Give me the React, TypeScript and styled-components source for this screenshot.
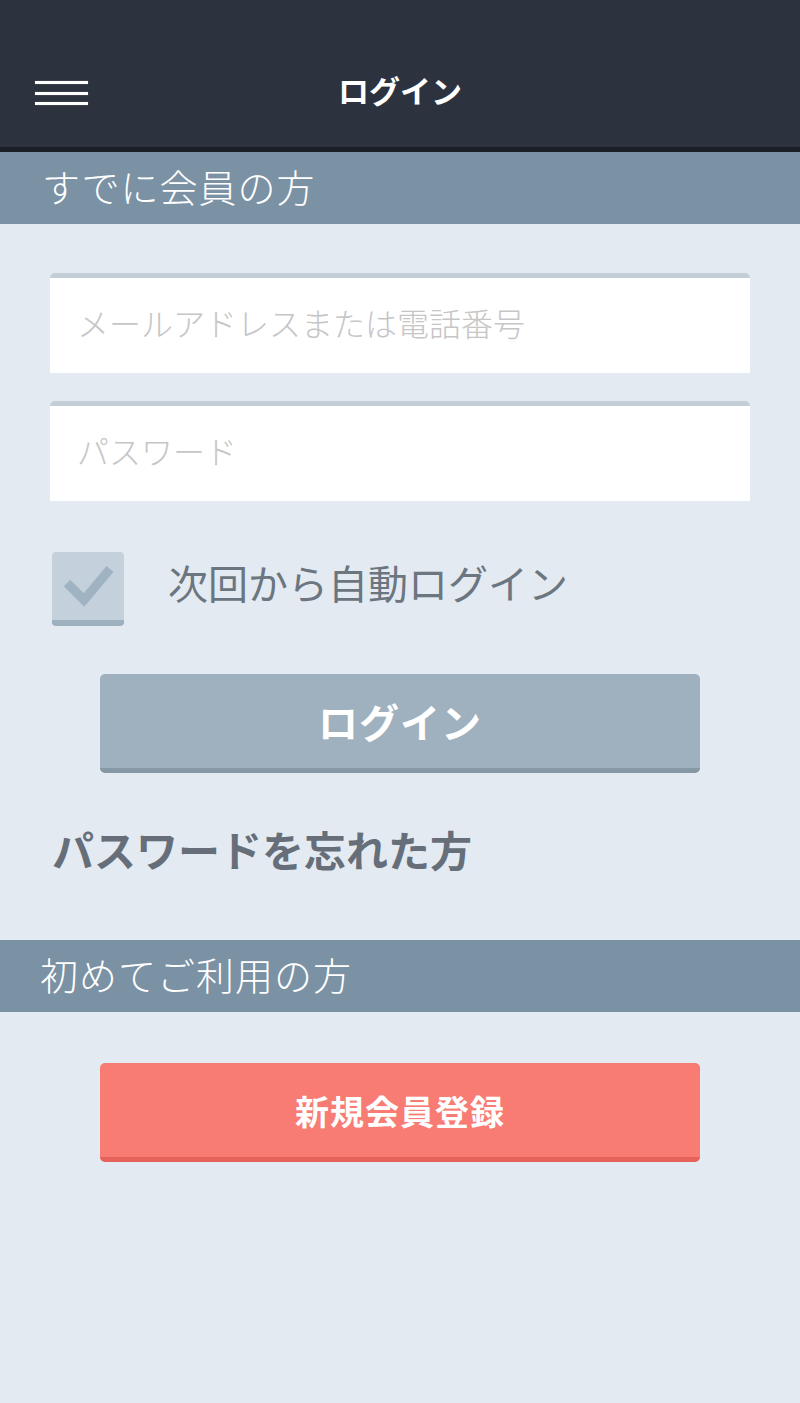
import styled, { createGlobalStyle } from "styled-components";

const GlobalStyle = createGlobalStyle`
  html, body {
    margin: 0;
    padding: 0;
    background: #e3eaf1;
  }
  body {
    font-family: "Noto Sans CJK JP", "Noto Sans", "Liberation Sans", sans-serif;
  }
  * {
    box-sizing: border-box;
  }
`;

const Page = styled.div`
  width: 800px;
  min-height: 1403px;
  background: #e3eaf1;
`;

const Header = styled.header`
  height: 152px;
  background: #2d333e;
  border-bottom: 5px solid #1b1f26;
  display: flex;
  align-items: flex-end;
  padding: 0 0 33px 0;
  position: relative;
`;

const HeaderRow = styled.div`
  width: 100%;
  height: 50px;
  display: flex;
  align-items: center;
  justify-content: center;
`;

const MenuButton = styled.button`
  position: absolute;
  left: 35px;
  top: 81px;
  width: 53px;
  height: 24px;
  padding: 0;
  border: none;
  background: transparent;
  display: flex;
  flex-direction: column;
  justify-content: space-between;
`;

const MenuLine = styled.span`
  display: block;
  width: 53px;
  height: 3px;
  background: #ffffff;
  box-shadow: 0 0 1px rgba(255, 255, 255, 0.6);
`;

const Title = styled.h1`
  margin: 0;
  color: #ffffff;
  font-size: 31px;
  font-weight: 700;
  line-height: 1;
`;

const SectionBar = styled.div`
  height: 72px;
  background: #7b91a4;
  display: flex;
  align-items: center;
  padding-left: ${(p: { $indent: number }) => p.$indent}px;
  padding-bottom: 6px;
  color: #ffffff;
  font-size: 38px;
  font-weight: 300;
  letter-spacing: 1px;
`;

const Form = styled.div`
  display: flex;
  flex-direction: column;
  padding: 49px 50px 0 50px;
`;

const Field = styled.input<{ $gap: number }>`
  display: block;
  width: 700px;
  height: 100px;
  margin-top: ${(p) => p.$gap}px;
  border: none;
  border-top: 5px solid #c3ced8;
  border-radius: 5px 5px 0 0;
  background: #ffffff;
  padding: 0 0 8px 27px;
  font-family: inherit;
  font-size: 32px;
  font-weight: 300;
  color: #555;
  outline: none;
  &::placeholder {
    color: #c6c6c6;
  }
`;

const CheckRow = styled.label`
  display: flex;
  align-items: center;
  gap: 44px;
  margin-top: 51px;
  padding-left: 2px;
`;

const CheckBox = styled.span`
  width: 72px;
  height: 74px;
  border-radius: 4px;
  background: #c4d1dc;
  border-bottom: 6px solid #9fb0bf;
  display: block;
`;

const CheckLabel = styled.span`
  color: #6c7680;
  font-size: 40px;
  line-height: 1;
  margin-top: -14px;
`;

const ButtonWrap = styled.div`
  display: flex;
  justify-content: center;
  margin-top: ${(p: { $gap: number }) => p.$gap}px;
`;

const ActionButton = styled.button<{ $bg: string; $edge: string; $size: number }>`
  width: 600px;
  height: 99px;
  border: none;
  border-radius: 5px;
  background: ${(p) => p.$bg};
  border-bottom: 5px solid ${(p) => p.$edge};
  color: #ffffff;
  font-family: inherit;
  font-size: ${(p) => p.$size}px;
  font-weight: 700;
  padding: 0;
  letter-spacing: 1px;
`;

const ForgotLink = styled.a`
  display: block;
  margin: 55px 0 0 2px;
  color: #666f79;
  font-size: 42px;
  font-weight: 700;
  line-height: 1;
  text-decoration: none;
`;

const Spacer = styled.div`
  height: 70px;
`;

export default function App() {
  return (
    <Page>
      <GlobalStyle />
      <Header>
        <MenuButton aria-label="menu">
          <MenuLine />
          <MenuLine />
          <MenuLine />
        </MenuButton>
        <HeaderRow>
          <Title>ログイン</Title>
        </HeaderRow>
      </Header>

      <SectionBar $indent={42}>すでに会員の方</SectionBar>
      <Form>
        <Field $gap={0} type="text" placeholder="メールアドレスまたは電話番号" />
        <Field $gap={28} type="password" placeholder="パスワード" />
        <CheckRow>
          <CheckBox>
            <svg width="72" height="68" viewBox="0 0 72 68">
              <path
                d="M15 31 L32 48 L58 17"
                fill="none"
                stroke="#a0b3c2"
                strokeWidth="9"
                strokeLinecap="butt"
                strokeLinejoin="miter"
              />
            </svg>
          </CheckBox>
          <CheckLabel>次回から自動ログイン</CheckLabel>
        </CheckRow>
        <ButtonWrap $gap={48}>
          <ActionButton $bg="#9fb1bf" $edge="#8697a5" $size={40}>
            ログイン
          </ActionButton>
        </ButtonWrap>
        <ForgotLink href="#">パスワードを忘れた方</ForgotLink>
      </Form>
      <Spacer />
      <SectionBar $indent={40}>初めてご利用の方</SectionBar>
      <ButtonWrap $gap={51}>
        <ActionButton $bg="#f87b74" $edge="#e5615a" $size={34}>
          新規会員登録
        </ActionButton>
      </ButtonWrap>
    </Page>
  );
}
